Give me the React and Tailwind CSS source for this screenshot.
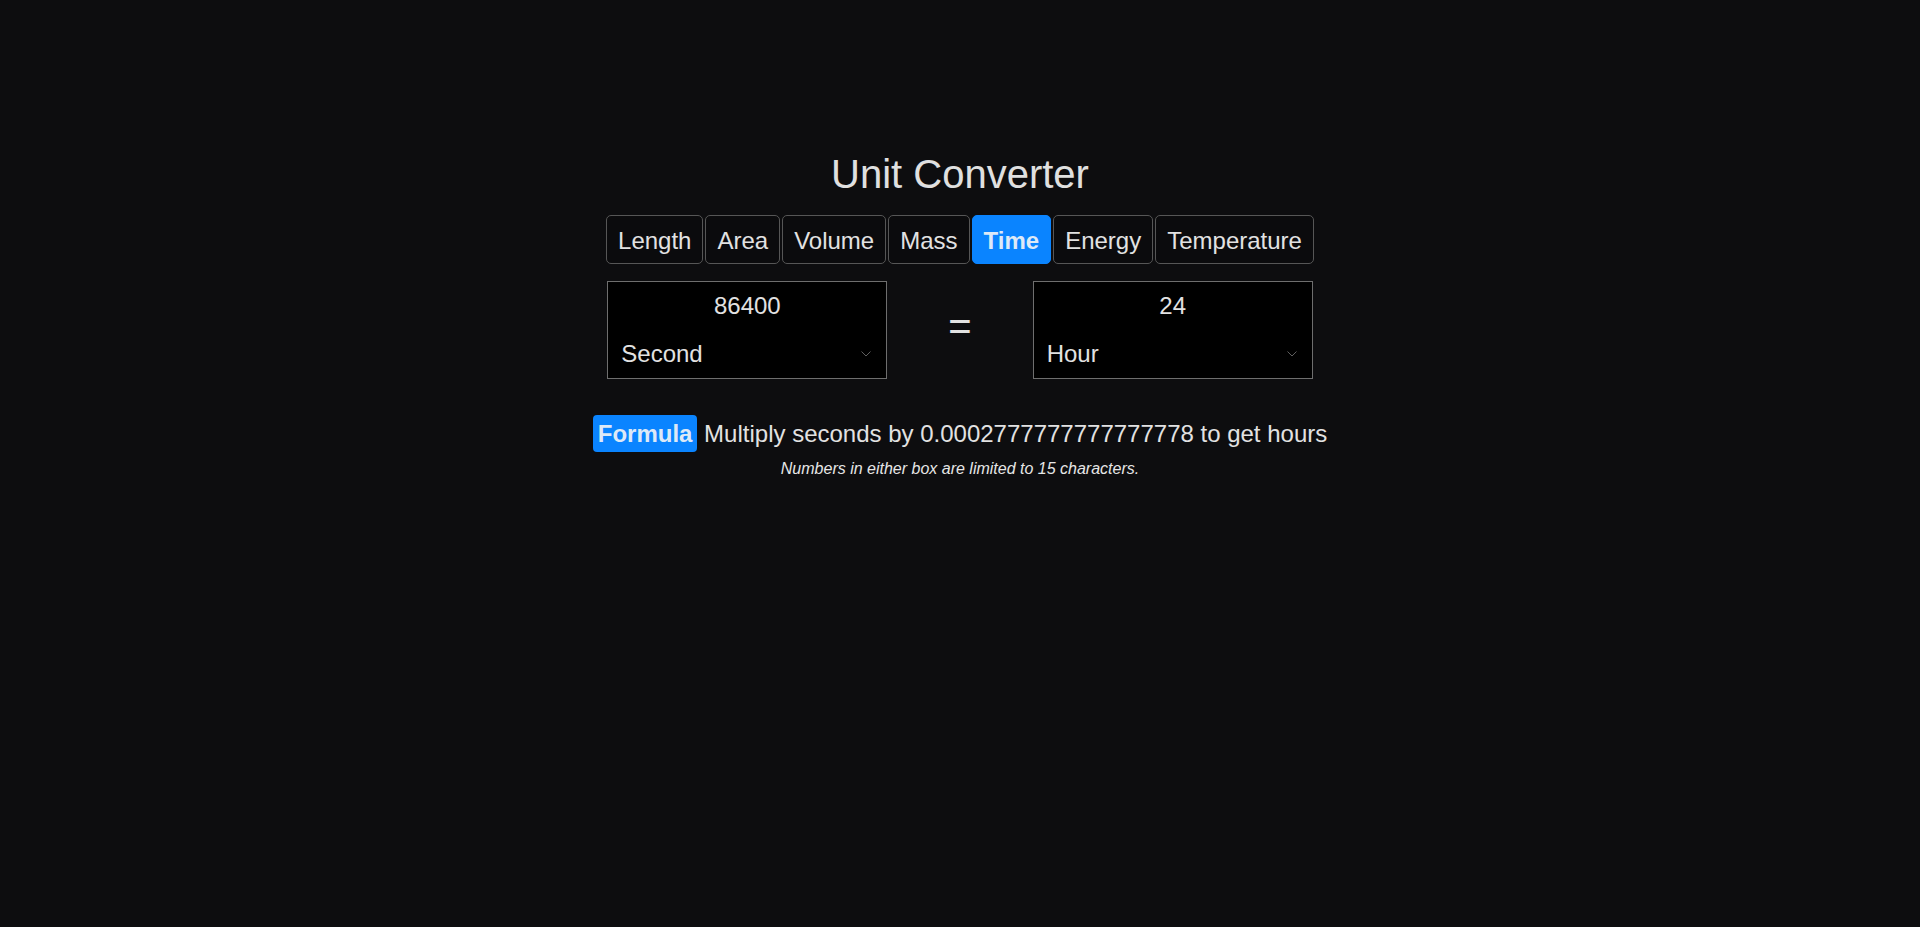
import React from "react";

const tabs = ["Length", "Area", "Volume", "Mass", "Time", "Energy", "Temperature"];

function Chevron() {
  return (
    <svg width="10" height="6" viewBox="0 0 10 6" fill="none">
      <polyline points="0.5,0.5 5,5 9.5,0.5" stroke="#5f5f5f" strokeWidth="1" />
    </svg>
  );
}

function UnitBox({ value, unit }) {
  return (
    <div className="w-[280px] border border-[#6e6e6e] bg-black flex flex-col">
      <input
        readOnly
        value={value}
        className="h-[48px] w-full bg-transparent text-center text-[24px] text-[#e2e2e2] outline-none"
      />
      <div className="h-[48px] flex items-center justify-between pl-[13px] pr-[15px]">
        <span className="text-[24px] text-[#e2e2e2]">{unit}</span>
        <Chevron />
      </div>
    </div>
  );
}

export default function App() {
  return (
    <div
      className="min-h-[927px] w-full bg-[#0d0d0f] flex flex-col items-center pt-[151px]"
      style={{ fontFamily: '"Liberation Sans", Arial, sans-serif' }}
    >
      <h1 className="text-[40px] leading-[46px] text-[#e0e0e0] font-normal">Unit Converter</h1>
      <div className="mt-[18px] flex gap-[2px]">
        {tabs.map((t) =>
          t === "Time" ? (
            <div
              key={t}
              className="px-[11px] pt-[11px] pb-[9px] leading-[27px] text-[24px] font-bold rounded-[5px] border border-[#0a84ff] bg-[#0a84ff] text-[#dde9f7]"
            >
              {t}
            </div>
          ) : (
            <div
              key={t}
              className="px-[11px] pt-[11px] pb-[9px] leading-[27px] text-[24px] rounded-[5px] border border-[#565656] bg-[#0b0b0d] text-[#e2e2e2]"
            >
              {t}
            </div>
          )
        )}
      </div>
      <div className="mt-[17px] flex items-center gap-[61px]">
        <UnitBox value="86400" unit="Second" />
        <span className="text-[40px] leading-[46px] text-[#e2e2e2] mb-[8px]">=</span>
        <UnitBox value="24" unit="Hour" />
      </div>
      <p className="mt-[41px] text-[24px] leading-[28px] text-[#e2e2e2]">
        <span className="bg-[#0a84ff] text-[#dde9f7] font-bold rounded-[4px] px-[5px] py-[5px]">Formula</span>{" "}
        Multiply seconds by 0.0002777777777777778 to get hours
      </p>
      <p className="mt-[11px] text-[16px] leading-[20px] italic text-[#e6e6e6]">
        Numbers in either box are limited to 15 characters.
      </p>
    </div>
  );
}
